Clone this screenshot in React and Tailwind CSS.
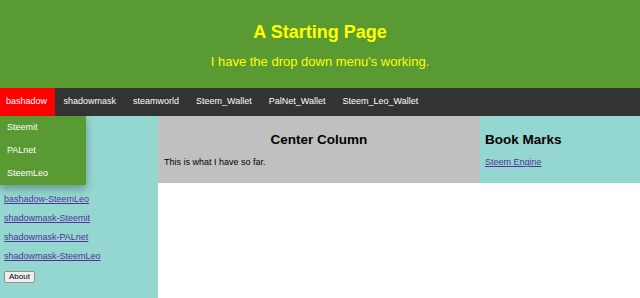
import React from "react";

const navItems = ["shadowmask", "steamworld", "Steem_Wallet", "PalNet_Wallet", "Steem_Leo_Wallet"];
const leftLinks = [
  "bashadow-Steemit",
  "bashadow-PALnet",
  "bashadow-SteemLeo",
  "shadowmask-Steemit",
  "shadowmask-PALnet",
  "shadowmask-SteemLeo",
];

export default function App() {
  return (
    <div className="w-[640px] h-[298px] overflow-hidden bg-white font-['Liberation_Sans',Arial,sans-serif] flex flex-col">
      <header className="h-[88px] bg-[#5a9a32] flex flex-col items-center pt-[21px] text-[#ffff00]">
        <h1 className="text-[18px] leading-[22px] font-bold">A Starting Page</h1>
        <p className="text-[13px] leading-[16px] mt-[11px]">I have the drop down menu's working.</p>
      </header>
      <nav className="h-[28px] bg-[#333333] flex items-stretch text-[9px] text-white relative z-10">
        <div className="relative bg-[#ff0000] pl-[6px] pr-[8px] flex items-center">
          bashadow
          <div className="absolute top-full left-0 w-[86px] bg-[#5a9a32] shadow-[0_4px_8px_rgba(0,0,0,0.3)] flex flex-col">
            {["Steemit", "PALnet", "SteemLeo"].map((t) => (
              <div key={t} className="h-[23px] px-[7px] flex items-center text-white">{t}</div>
            ))}
          </div>
        </div>
        {navItems.map((t) => (
          <div key={t} className="px-[8.5px] flex items-center">{t}</div>
        ))}
      </nav>
      <div className="flex flex-1 items-stretch">
        <aside className="w-[158px] bg-[#93d7d0] pt-[36px] pl-[4px] text-[9px]">
          <div className="flex flex-col">
            {leftLinks.map((t) => (
              <div key={t} className="h-[19px] flex items-center">
                <a href="#" className="underline text-[#55309a]">{t}</a>
              </div>
            ))}
          </div>
          <button className="mt-[5px] h-[12px] px-[4px] text-[8px] leading-[10px] text-black bg-[#efefef] border border-[#8f8f8f] rounded-[2px] flex items-center">
            About
          </button>
        </aside>
        <div className="flex-1 flex flex-col">
          <div className="flex items-stretch h-[67px]">
            <section className="w-[322px] bg-[#c0c0c0] px-[6px] pt-[16px]">
              <h2 className="text-[13.5px] leading-[16px] font-bold text-center text-black">Center Column</h2>
              <p className="text-[9px] leading-[11px] mt-[9px] text-black">This is what I have so far.</p>
            </section>
            <section className="flex-1 bg-[#93d7d0] px-[5px] pt-[16px]">
              <h2 className="text-[13.5px] leading-[16px] font-bold text-black">Book Marks</h2>
              <p className="text-[9px] leading-[11px] mt-[9px]">
                <a href="#" className="underline text-[#55309a]">Steem Engine</a>
              </p>
            </section>
          </div>
        </div>
      </div>
    </div>
  );
}
